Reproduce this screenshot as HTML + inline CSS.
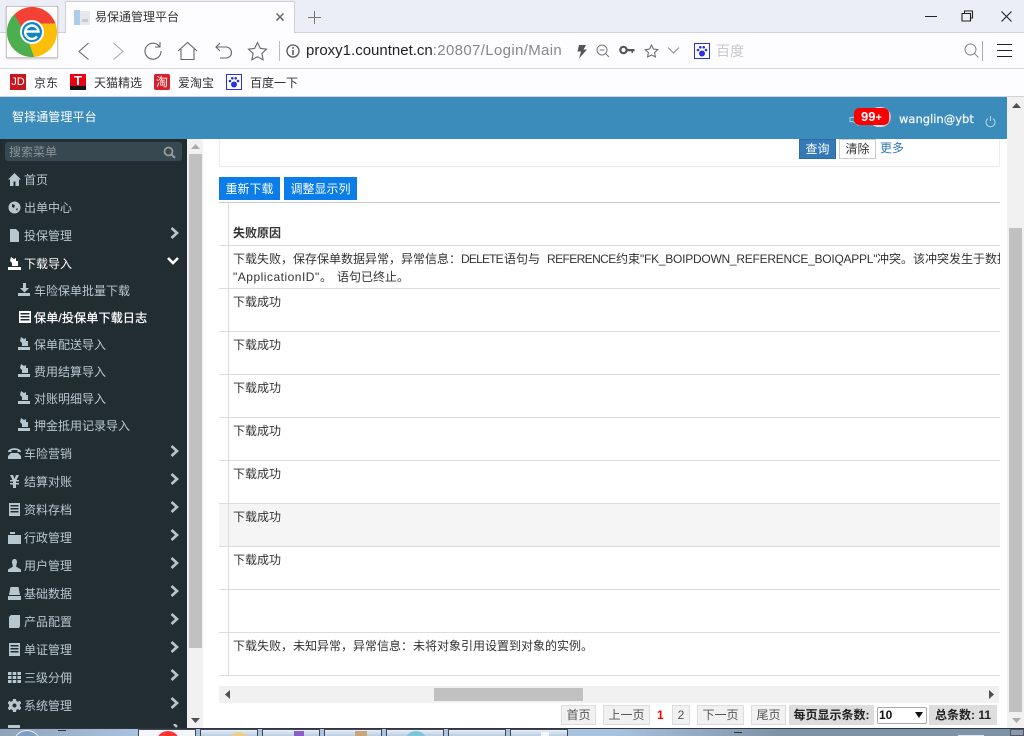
<!DOCTYPE html>
<html lang="zh-CN">
<head>
<meta charset="utf-8">
<title>易保通管理平台</title>
<style>
html,body{margin:0;padding:0;width:1024px;height:736px;overflow:hidden;background:#fff}
body{position:relative;font-family:"Liberation Sans","Noto Sans CJK SC",sans-serif;font-size:12px;color:#333}
div,span,svg{position:absolute;box-sizing:border-box}
.t{white-space:nowrap;line-height:16px}
.mi{color:#b8c7ce;left:24px;font-size:12px}
.si{color:#b8c7ce;left:34px;font-size:12px}
.ic{left:8px;width:13px;height:13px;fill:#b8c7ce}
.sic{left:18px;width:14px;height:14px;fill:#b8c7ce}
.ch{left:169px;width:10px;height:12px;fill:none;stroke:#b8c7ce;stroke-width:2.6;margin-top:1px}
.ln{left:219px;width:781px;height:1px;background:#ddd}
.cell{left:233px;color:#333}
.pg{height:20px;top:705px;background:#f1f1f1;border:1px solid #ddd;text-align:center;line-height:18px;color:#555}
.g{fill:none;stroke:#666;stroke-width:1.1}
.tb{top:729px;width:58px;height:7px;background:linear-gradient(180deg,#e8eef5,#b9cde2);border:1px solid #445;border-bottom:0;overflow:hidden}
</style>
</head>
<body>
<!-- browser tab strip -->
<div style="left:0;top:0;width:1024px;height:33px;background:#ebeef6;border-bottom:1px solid #cfd1d6"></div>
<div style="left:65px;top:1px;width:230px;height:32px;background:#fdfdff;border:1px solid #cfd1d6;border-bottom:0"></div>
<svg style="left:73px;top:9px;width:18px;height:17px" viewBox="0 0 18 17"><rect x="1" y="1" width="6" height="15" fill="#a9cdea"/><rect x="7" y="2" width="10" height="14" fill="#e6e8ec"/><rect x="9" y="10" width="6" height="3" fill="#c8ccd2"/></svg>
<div class="t" style="left:95px;top:9px;color:#333">易保通管理平台</div>
<svg style="left:275px;top:12px;width:10px;height:10px" viewBox="0 0 10 10"><path d="M1.500 1.500l7 7M8.500 1.500l-7 7" stroke="#666" stroke-width="1.500" fill="none"/></svg>
<svg style="left:307px;top:10px;width:15px;height:15px" viewBox="0 0 15 15"><path d="M7.500 1v13M1 7.500h13" stroke="#777" stroke-width="1" fill="none"/></svg>
<!-- window buttons -->
<div style="left:925px;top:16px;width:12px;height:1px;background:#222"></div>
<svg style="left:961px;top:10px;width:13px;height:12px" viewBox="0 0 13 12"><path d="M3.500 3V1h8v7h-2M1 3.500h8.500V11H1z" fill="none" stroke="#222" stroke-width="1.100"/></svg>
<svg style="left:1000px;top:10px;width:13px;height:13px" viewBox="0 0 13 13"><path d="M1.500 1.500l10 10M11.500 1.500l-10 10" fill="none" stroke="#222" stroke-width="1.100"/></svg>
<!-- address bar -->
<div style="left:0;top:33px;width:1024px;height:36px;background:#fdfdff;border-bottom:1px solid #d9d9dc"></div>
<svg style="left:76px;top:41px;width:16px;height:20px" viewBox="0 0 16 20"><path d="M12.500 2L3 10.500l9.500 8" class="g"/></svg>
<svg style="left:110px;top:41px;width:16px;height:20px" viewBox="0 0 16 20"><path d="M3.500 2l9.500 8.500-9.500 8" fill="none" stroke="#aaa" stroke-width="1.100"/></svg>
<svg style="left:143px;top:41px;width:20px;height:20px" viewBox="0 0 20 20"><path d="M16.500 5.500A8 8 0 1 0 18 10" class="g"/><path d="M17 1v5h-5" class="g"/></svg>
<svg style="left:177px;top:41px;width:21px;height:20px" viewBox="0 0 21 20"><path d="M1 10l9.500-8.500L20 10M4 8v10.500h13V8" class="g"/></svg>
<svg style="left:214px;top:41px;width:20px;height:20px" viewBox="0 0 20 20"><path d="M6 2L2 6l4 4M2 6h10a5.500 5.500 0 0 1 0 11H6" class="g"/></svg>
<svg style="left:247px;top:41px;width:21px;height:20px" viewBox="0 0 21 20"><path d="M10.500 1.500l2.800 5.900 6.200.8-4.600 4.300 1.200 6.300-5.600-3.100-5.600 3.100 1.200-6.300L1.500 8.200l6.200-.8z" class="g"/></svg>
<div style="left:279px;top:41px;width:1px;height:20px;background:#bbb"></div>
<svg style="left:286px;top:44px;width:14px;height:14px" viewBox="0 0 14 14"><circle cx="7" cy="7" r="6" fill="none" stroke="#555" stroke-width="1.300"/><path d="M7 3v1.800M7 6v5" stroke="#555" stroke-width="1.500"/></svg>
<div class="t" style="left:306px;top:41px;font-size:15px;line-height:20px;color:#222">proxy1.countnet.cn<span style="position:static;color:#888;letter-spacing:.35px">:20807/Login/Main</span></div>
<svg style="left:576px;top:44px;width:12px;height:15px" viewBox="0 0 12 15"><path d="M3 1h7L7.500 5.500H11L3 14.500l2-7H1.500z" fill="#555"/></svg>
<svg style="left:596px;top:44px;width:14px;height:14px" viewBox="0 0 14 14"><circle cx="6" cy="6" r="5" fill="none" stroke="#777"/><path d="M3.500 6h5M10 10l3 3" stroke="#777" fill="none"/></svg>
<svg style="left:619px;top:45px;width:16px;height:11px" viewBox="0 0 16 11"><circle cx="4.500" cy="5" r="3.200" fill="none" stroke="#555" stroke-width="2.200"/><path d="M8 4h7.500v2.200H14V8h-1.500V6.200H8z" fill="#555"/></svg>
<svg style="left:644px;top:44px;width:15px;height:14px" viewBox="0 0 15 14"><path d="M7.500 1l1.900 4 4.400.6-3.200 3 .8 4.400-3.900-2.100-3.900 2.100.8-4.400-3.200-3 4.400-.6z" fill="none" stroke="#666"/></svg>
<svg style="left:667px;top:46px;width:13px;height:9px" viewBox="0 0 13 9"><path d="M1 1.500l5.500 5.500L12 1.500" fill="none" stroke="#888"/></svg>
<svg style="left:694px;top:43px;width:16px;height:16px" viewBox="0 0 16 16"><rect x=".5" y=".5" width="15" height="15" fill="#fff" stroke="#2932e1"/><circle cx="8" cy="10.500" r="3" fill="#2932e1"/><circle cx="4" cy="7" r="1.300" fill="#2932e1"/><circle cx="12" cy="7" r="1.300" fill="#2932e1"/><circle cx="6.300" cy="4.300" r="1.300" fill="#2932e1"/><circle cx="9.700" cy="4.300" r="1.300" fill="#2932e1"/></svg>
<div class="t" style="left:716px;top:42px;font-size:14px;line-height:18px;color:#c8c8c8">百度</div>
<svg style="left:964px;top:43px;width:16px;height:15px" viewBox="0 0 16 15"><circle cx="6.500" cy="6.500" r="5.500" fill="none" stroke="#888" stroke-width="1"/><path d="M10.500 10.500l4 4" stroke="#888" stroke-width="1"/></svg>
<div style="left:982px;top:41px;width:1px;height:20px;background:#aaa"></div>
<div style="left:997px;top:44px;width:15px;height:1px;background:#222"></div>
<div style="left:997px;top:50px;width:15px;height:1px;background:#222"></div>
<div style="left:997px;top:56px;width:15px;height:1px;background:#222"></div>
<!-- logo -->
<div style="left:6px;top:6px;width:52px;height:52px;background:#fff;border:1px solid #c8c8c8;box-shadow:0 1px 2px rgba(0,0,0,.2)"></div>
<svg style="left:7px;top:7px;width:50px;height:50px" viewBox="0 0 50 50"><circle cx="25" cy="25" r="25" fill="#fbbf0a"/><path d="M25 0A25 25 0 0 1 48.500 16.500H25A9 9 0 0 0 15 21L7 8A25 25 0 0 1 25 0z" fill="#f34136"/><path d="M7 7.500L19 27 27 49.900A25 25 0 0 1 7 7.500z" fill="#4cae4f"/><circle cx="25" cy="25" r="12" fill="#fff"/><circle cx="25" cy="25" r="10" fill="#0d87c2"/><path d="M18.500 24.500h13a6.700 6.700 0 1 0-1.500 5" fill="none" stroke="#fff" stroke-width="2.400"/></svg>
<!-- bookmarks -->
<div style="left:0;top:69px;width:1024px;height:28px;background:#fdfdff;border-bottom:1px solid #d3d3d6"></div>
<div style="left:10px;top:74px;width:16px;height:16px;background:#c9151e;color:#fff;font-size:11px;line-height:16px;text-align:center">JD</div>
<div class="t" style="left:34px;top:75px">京东</div>
<div style="left:70px;top:74px;width:16px;height:16px;background:#e60012;color:#fff;font-size:13px;line-height:13px;text-align:center;font-weight:bold">T</div>
<div style="left:70px;top:86px;width:16px;height:4px;background:#111"></div>
<div class="t" style="left:94px;top:75px">天猫精选</div>
<div style="left:154px;top:74px;width:16px;height:16px;background:#d6202c;color:#fff;font-size:12px;line-height:16px;text-align:center;border-radius:2px">淘</div>
<div class="t" style="left:178px;top:75px">爱淘宝</div>
<svg style="left:226px;top:74px;width:16px;height:16px" viewBox="0 0 16 16"><rect x=".5" y=".5" width="15" height="15" fill="#fff" stroke="#2932e1"/><circle cx="8" cy="10.500" r="3" fill="#2932e1"/><circle cx="4" cy="7" r="1.300" fill="#2932e1"/><circle cx="12" cy="7" r="1.300" fill="#2932e1"/><circle cx="6.300" cy="4.300" r="1.300" fill="#2932e1"/><circle cx="9.700" cy="4.300" r="1.300" fill="#2932e1"/></svg>
<div class="t" style="left:250px;top:75px">百度一下</div>
<!-- app header -->
<div style="left:0;top:97px;width:1007px;height:42px;background:#3b8cbb"></div>
<div class="t" style="left:12px;top:109px;color:#fff;letter-spacing:.1px">智择通管理平台</div>
<svg style="left:849px;top:113px;width:10px;height:13px" viewBox="0 0 10 13"><path d="M1 4.500h3L9 1v11L4 8.500H1z" fill="none" stroke="#a9d3ea"/></svg>
<div style="left:869px;top:107px;width:22px;height:20px;border-radius:11px;background:linear-gradient(90deg,#fff,#bbb)"></div>
<div class="t" style="left:854px;top:108px;width:35px;height:17px;background:#fb0000;border-radius:5px;color:#fff;font-weight:bold;font-size:13px;line-height:17px;text-align:center">99<span style="position:static;font-size:11px">+</span></div>
<div class="t" style="left:899px;top:111px;color:#f2f8fc;font-family:'DejaVu Sans',sans-serif;font-size:11.500px;-webkit-text-stroke:.25px #f2f8fc">wanglin@ybt</div>
<svg style="left:985px;top:116px;width:11px;height:12px" viewBox="0 0 11 12"><path d="M3 2.500a4.500 4.500 0 1 0 5 0M5.500 0v5" fill="none" stroke="#b7d8ea"/></svg>
<!-- sidebar -->
<div style="left:0;top:139px;width:187px;height:589px;background:#222d32"></div>
<div style="left:5px;top:142px;width:177px;height:19px;background:#374850;border-radius:3px"></div>
<div class="t" style="left:9px;top:144px;color:#8a9499">搜索菜单</div>
<svg style="left:163px;top:146px;width:13px;height:13px" viewBox="0 0 13 13"><circle cx="5.500" cy="5.500" r="4" fill="none" stroke="#999" stroke-width="1.800"/><path d="M8.500 8.500l3.500 3.500" stroke="#999" stroke-width="2"/></svg>

<svg class="ic" style="top:173px" viewBox="0 0 13 13"><path d="M6.500 0L0 6.500h2V13h3.500V8.500h2V13H11V6.500h2z"/></svg>
<div class="t mi" style="top:172px">首页</div>
<svg class="ic" style="top:201px" viewBox="0 0 13 13"><circle cx="6.500" cy="6.500" r="6"/><path d="M4 3l3 1-1 3-2-1zM8 8l2-1-1 3z" fill="#222d32"/></svg>
<div class="t mi" style="top:200px">出单中心</div>
<svg class="ic" style="top:229px" viewBox="0 0 13 13"><path d="M2 0h6l3 3v10H2z"/></svg>
<div class="t mi" style="top:228px">投保管理</div>
<svg class="ch" style="top:226px" viewBox="0 0 10 12"><path d="M2.500 1l5.500 5-5.500 5"/></svg>

<svg class="ic" style="top:257px;fill:#fff" viewBox="0 0 13 13"><path d="M3 0l3 2 2-1 0 3 2 0 0 5H4V6L2 4zM0 10h13v3H0z"/></svg>
<div class="t mi" style="top:256px;color:#fff">下载导入</div>
<svg class="ch" style="top:254px;left:167px;width:12px;stroke:#fff" viewBox="0 0 12 12"><path d="M1 3l5 5 5-5"/></svg>

<svg class="sic" style="top:283px" viewBox="0 0 14 14"><path d="M5 0h3v5h3L6.500 9.500 2 5h3zM0 10h12v3H0z"/></svg>
<div class="t si" style="top:283px">车险保单批量下载</div>
<svg class="sic" style="top:310px;fill:#fff;left:19px" viewBox="0 0 14 14"><path d="M0 1h12v12H0zM1.500 3v1.500h9V3zm0 3v1.500h9V6zm0 3v1.500h9V9z" fill-rule="evenodd"/></svg>
<div class="t si" style="top:310px;color:#fff;-webkit-text-stroke:.25px #fff;letter-spacing:.2px">保单/投保单下载日志</div>
<svg class="sic" style="top:337px" viewBox="0 0 14 14"><path d="M3 0l3 2 2-1 0 3 2 0 0 5H4V6L2 4zM0 10h12v3H0z"/></svg>
<div class="t si" style="top:337px">保单配送导入</div>
<svg class="sic" style="top:364px" viewBox="0 0 14 14"><path d="M3 0l3 2 2-1 0 3 2 0 0 5H4V6L2 4zM0 10h12v3H0z"/></svg>
<div class="t si" style="top:364px">费用结算导入</div>
<svg class="sic" style="top:391px" viewBox="0 0 14 14"><path d="M3 0l3 2 2-1 0 3 2 0 0 5H4V6L2 4zM0 10h12v3H0z"/></svg>
<div class="t si" style="top:391px">对账明细导入</div>
<svg class="sic" style="top:418px" viewBox="0 0 14 14"><path d="M3 0l3 2 2-1 0 3 2 0 0 5H4V6L2 4zM0 10h12v3H0z"/></svg>
<div class="t si" style="top:418px">押金抵用记录导入</div>

<svg class="ic" style="top:447px" viewBox="0 0 13 13"><path d="M0 5C0 0 13 0 13 5H9.500V3h-6v2zM3 6h7l3 3v3H0V9z"/></svg>
<div class="t mi" style="top:446px">车险营销</div>
<svg class="ch" style="top:444px" viewBox="0 0 10 12"><path d="M2.500 1l5.500 5-5.500 5"/></svg>
<svg class="ic" style="top:475px" viewBox="0 0 13 13"><path d="M2 0h3l1.500 4L8 0h3L8.500 5H11v1.500H8V8h3v1.500H8V13H5V9.500H2V8h3V6.500H2V5h2.500z"/></svg>
<div class="t mi" style="top:474px">结算对账</div>
<svg class="ch" style="top:472px" viewBox="0 0 10 12"><path d="M2.500 1l5.500 5-5.500 5"/></svg>
<svg class="ic" style="top:503px" viewBox="0 0 13 13"><path d="M1 0h11v13H1zM2.500 2v1.500h8V2zm0 3v1.500h8V5zm0 3v1.500h8V8z" fill-rule="evenodd"/></svg>
<div class="t mi" style="top:502px">资料存档</div>
<svg class="ch" style="top:500px" viewBox="0 0 10 12"><path d="M2.500 1l5.500 5-5.500 5"/></svg>
<svg class="ic" style="top:531px" viewBox="0 0 13 13"><path d="M0 4h13v9H0zM2 1h5v2H2z"/></svg>
<div class="t mi" style="top:530px">行政管理</div>
<svg class="ch" style="top:528px" viewBox="0 0 10 12"><path d="M2.500 1l5.500 5-5.500 5"/></svg>
<svg class="ic" style="top:559px" viewBox="0 0 13 13"><path d="M6.500 0C9 0 9.500 3 8.500 5.500L8 7.500l5 3V13H0v-2.500l5-3-.5-2C3.500 3 4 0 6.500 0z"/></svg>
<div class="t mi" style="top:558px">用户管理</div>
<svg class="ch" style="top:556px" viewBox="0 0 10 12"><path d="M2.500 1l5.500 5-5.500 5"/></svg>
<svg class="ic" style="top:587px" viewBox="0 0 13 13"><path d="M2.500 0h8L12 8H1zM0 9h13v4H0z"/></svg>
<div class="t mi" style="top:586px">基础数据</div>
<svg class="ch" style="top:584px" viewBox="0 0 10 12"><path d="M2.500 1l5.500 5-5.500 5"/></svg>
<svg class="ic" style="top:615px" viewBox="0 0 13 13"><path d="M1 2l2-2h9v11l-1 2H1z"/></svg>
<div class="t mi" style="top:614px">产品配置</div>
<svg class="ch" style="top:612px" viewBox="0 0 10 12"><path d="M2.500 1l5.500 5-5.500 5"/></svg>
<svg class="ic" style="top:643px" viewBox="0 0 13 13"><path d="M1 0h11v13H1zM2.500 2v1.500h8V2zm0 3v1.500h8V5zm0 3v1.500h8V8z" fill-rule="evenodd"/></svg>
<div class="t mi" style="top:642px">单证管理</div>
<svg class="ch" style="top:640px" viewBox="0 0 10 12"><path d="M2.500 1l5.500 5-5.500 5"/></svg>
<svg class="ic" style="top:671px" viewBox="0 0 13 13"><path d="M0 1h3.500v3H0zM4.700 1h3.500v3H4.700zM9.400 1H13v3H9.400zM0 5h3.500v3H0zM4.700 5h3.500v3H4.700zM9.400 5H13v3H9.400zM0 9h3.500v3H0zM4.700 9h3.500v3H4.700zM9.400 9H13v3H9.400z"/></svg>
<div class="t mi" style="top:670px">三级分佣</div>
<svg class="ch" style="top:668px" viewBox="0 0 10 12"><path d="M2.500 1l5.500 5-5.500 5"/></svg>
<svg class="ic" style="top:699px" viewBox="0 0 13 13"><path d="M5 0h3l.4 2 1.600.7 1.800-1 1.600 2.400-1.500 1.400v1.800l1.500 1.400-1.600 2.400-1.800-1-1.600.7L8 13H5l-.4-2-1.600-.7-1.800 1L-.4 8.900 1.100 7.500V5.700L-.4 4.300 1.200 1.700l1.800 1 1.600-.7zM6.500 4.500a2 2 0 1 0 0 4 2 2 0 0 0 0-4z" fill-rule="evenodd"/></svg>
<div class="t mi" style="top:698px">系统管理</div>
<svg class="ch" style="top:696px" viewBox="0 0 10 12"><path d="M2.500 1l5.500 5-5.500 5"/></svg>
<div style="left:8px;top:725px;width:12px;height:3px;background:#b8c7ce"></div>
<svg class="ch" style="top:723px;height:4px" viewBox="0 0 10 4"><path d="M5 0l3 3"/></svg>

<!-- sidebar scrollbar -->
<div style="left:187px;top:139px;width:16px;height:589px;background:#f1f1f1"></div>
<div style="left:189px;top:154px;width:13px;height:494px;background:#c1c1c1"></div>
<svg style="left:191px;top:144px;width:9px;height:5px" viewBox="0 0 9 5"><path d="M4.500 0L9 5H0z" fill="#aaa"/></svg>
<svg style="left:191px;top:718px;width:9px;height:5px" viewBox="0 0 9 5"><path d="M0 0h9L4.500 5z" fill="#505050"/></svg>

<!-- main -->
<div style="left:219px;top:139px;width:781px;height:28px;background:#fff;border:1px solid #e8edf4;border-top:0;border-radius:0 0 2px 2px"></div>
<div class="t" style="left:799px;top:139px;width:37px;height:20px;background:#337ab7;border:1px solid #2e6da4;color:#fff;text-align:center;line-height:19px">查询</div>
<div class="t" style="left:839px;top:139px;width:37px;height:20px;background:#fff;border:1px solid #ccc;color:#333;text-align:center;line-height:19px">清除</div>
<div class="t" style="left:880px;top:140px;color:#337ab7">更多</div>

<div class="t" style="left:219px;top:177px;width:61px;height:23px;background:#0a7de8;color:#fff;text-align:center;line-height:25px">重新下载</div>
<div class="t" style="left:284px;top:177px;width:73px;height:23px;background:#0a7de8;color:#fff;text-align:center;line-height:25px">调整显示列</div>

<div style="left:219px;top:503px;width:781px;height:43px;background:#f5f5f5"></div>
<div style="left:219px;top:202px;width:781px;height:1px;background:#ccc"></div>
<div class="ln" style="top:245px"></div>
<div class="ln" style="top:288px"></div>
<div class="ln" style="top:331px"></div>
<div class="ln" style="top:374px"></div>
<div class="ln" style="top:417px"></div>
<div class="ln" style="top:460px"></div>
<div class="ln" style="top:503px"></div>
<div class="ln" style="top:546px"></div>
<div class="ln" style="top:589px"></div>
<div class="ln" style="top:632px"></div>
<div class="ln" style="top:675px"></div>
<div style="left:228px;top:203px;width:1px;height:472px;background:#ddd"></div>

<div class="t cell" style="top:225px;font-weight:bold">失败原因</div>
<div style="left:233px;top:250px;width:767px;height:36px;overflow:hidden;line-height:18px">
<div class="t" style="left:0;top:0;line-height:18px">下载失败，保存保单数据异常，异常信息：</div>
<div class="t" style="left:228px;top:0;line-height:18px;letter-spacing:-.8px">DELETE</div>
<div class="t" style="left:271px;top:0;line-height:18px">语句与</div>
<div class="t" style="left:314px;top:0;line-height:18px;letter-spacing:-.6px">REFERENCE</div>
<div class="t" style="left:383px;top:0;line-height:18px">约束</div>
<div class="t" style="left:407px;top:0;line-height:18px;letter-spacing:-.25px">"FK_BOIPDOWN_REFERENCE_BOIQAPPL"</div>
<div class="t" style="left:644px;top:0;line-height:18px">冲突。该冲突发生于数据库</div>
<div class="t" style="left:0;top:18px;line-height:18px;letter-spacing:.5px">"ApplicationID"</div>
<div class="t" style="left:87px;top:18px;line-height:18px">。</div>
<div class="t" style="left:104px;top:18px;line-height:18px">语句已终止。</div>
</div>
<div class="t cell" style="top:294px">下载成功</div>
<div class="t cell" style="top:337px">下载成功</div>
<div class="t cell" style="top:380px">下载成功</div>
<div class="t cell" style="top:423px">下载成功</div>
<div class="t cell" style="top:466px">下载成功</div>
<div class="t cell" style="top:509px">下载成功</div>
<div class="t cell" style="top:552px">下载成功</div>
<div class="t cell" style="top:638px">下载失败，未知异常，异常信息：未将对象引用设置到对象的实例。</div>

<!-- horizontal scrollbar -->
<div style="left:219px;top:686px;width:780px;height:17px;background:#f1f1f1"></div>
<div style="left:434px;top:688px;width:149px;height:13px;background:#c1c1c1"></div>
<svg style="left:225px;top:690px;width:5px;height:9px" viewBox="0 0 5 9"><path d="M5 0v9L0 4.500z" fill="#505050"/></svg>
<svg style="left:989px;top:690px;width:5px;height:9px" viewBox="0 0 5 9"><path d="M0 0l5 4.500L0 9z" fill="#505050"/></svg>

<!-- pagination -->
<div class="pg" style="left:561px;width:35px">首页</div>
<div class="pg" style="left:603px;width:47px">上一页</div>
<div class="t" style="left:657px;top:707px;color:#f00;font-weight:bold">1</div>
<div class="pg" style="left:672px;width:18px">2</div>
<div class="pg" style="left:697px;width:47px">下一页</div>
<div class="pg" style="left:751px;width:35px">尾页</div>
<div class="t" style="left:789px;top:705px;width:85px;height:20px;background:#ddd;color:#222;font-weight:bold;line-height:20px;text-align:center">每页显示条数:</div>
<div class="t" style="left:877px;top:707px;width:50px;height:17px;background:#fff;border:1px solid #aaa;border-radius:2px;color:#111;font-weight:bold;line-height:15px;padding-left:1px">10</div>
<svg style="left:915px;top:712px;width:8px;height:6px" viewBox="0 0 8 6"><path d="M0 0h8L4 6z" fill="#111"/></svg>
<div class="t" style="left:929px;top:705px;width:68px;height:20px;background:#ddd;color:#222;font-weight:bold;line-height:20px;text-align:center">总条数: 11</div>

<!-- page scrollbar -->
<div style="left:1007px;top:97px;width:17px;height:631px;background:#f1f1f1"></div>
<div style="left:1009px;top:228px;width:13px;height:484px;background:#c1c1c1"></div>
<svg style="left:1012px;top:103px;width:9px;height:5px" viewBox="0 0 9 5"><path d="M4.500 0L9 5H0z" fill="#505050"/></svg>
<svg style="left:1012px;top:718px;width:9px;height:5px" viewBox="0 0 9 5"><path d="M0 0h9L4.500 5z" fill="#aaa"/></svg>

<!-- taskbar -->
<div style="left:0;top:728px;width:1024px;height:8px;background:linear-gradient(90deg,#8fa3b8 0,#a9c2dd 13%,#a9c2dd 60%,#7f93a8 76%,#7f93a8 100%);border-top:1px solid #2b3642"></div>
<div style="left:13px;top:730px;width:28px;height:28px;border:1px solid #e6edf4;border-radius:50%;background:#7f9fc0"></div>
<div style="left:58px;top:730px;width:8px;height:1px;background:#333"></div>
<div class="tb" style="left:138px;background:#f4f7fa"><div style="left:17px;top:1px;width:24px;height:24px;border-radius:50%;background:#f33"></div></div>
<div class="tb" style="left:200px"><div style="left:28px;top:2px;width:20px;height:20px;border-radius:50%;background:#e8cf8a"></div></div>
<div class="tb" style="left:262px"><div style="left:31px;top:1px;width:10px;height:10px;background:#8a5fc8"></div></div>
<div class="tb" style="left:324px"><div style="left:30px;top:1px;width:12px;height:10px;background:#c9a57a"></div></div>
<div class="tb" style="left:386px"><div style="left:18px;top:1px;width:22px;height:22px;border-radius:50%;background:#7cc4d8"></div></div>
<div class="tb" style="left:448px"></div>
<div class="tb" style="left:510px"><div style="left:30px;top:2px;width:8px;height:5px;background:#f4f7fa"></div></div>
<div style="left:734px;top:732px;width:8px;height:1px;background:#333"></div>
<div style="left:958px;top:735px;width:26px;height:1px;background:#dfe6ee"></div>
<div style="left:1010px;top:729px;width:14px;height:7px;background:#8a9bad;border:1px solid #556"></div>
</body>
</html>
